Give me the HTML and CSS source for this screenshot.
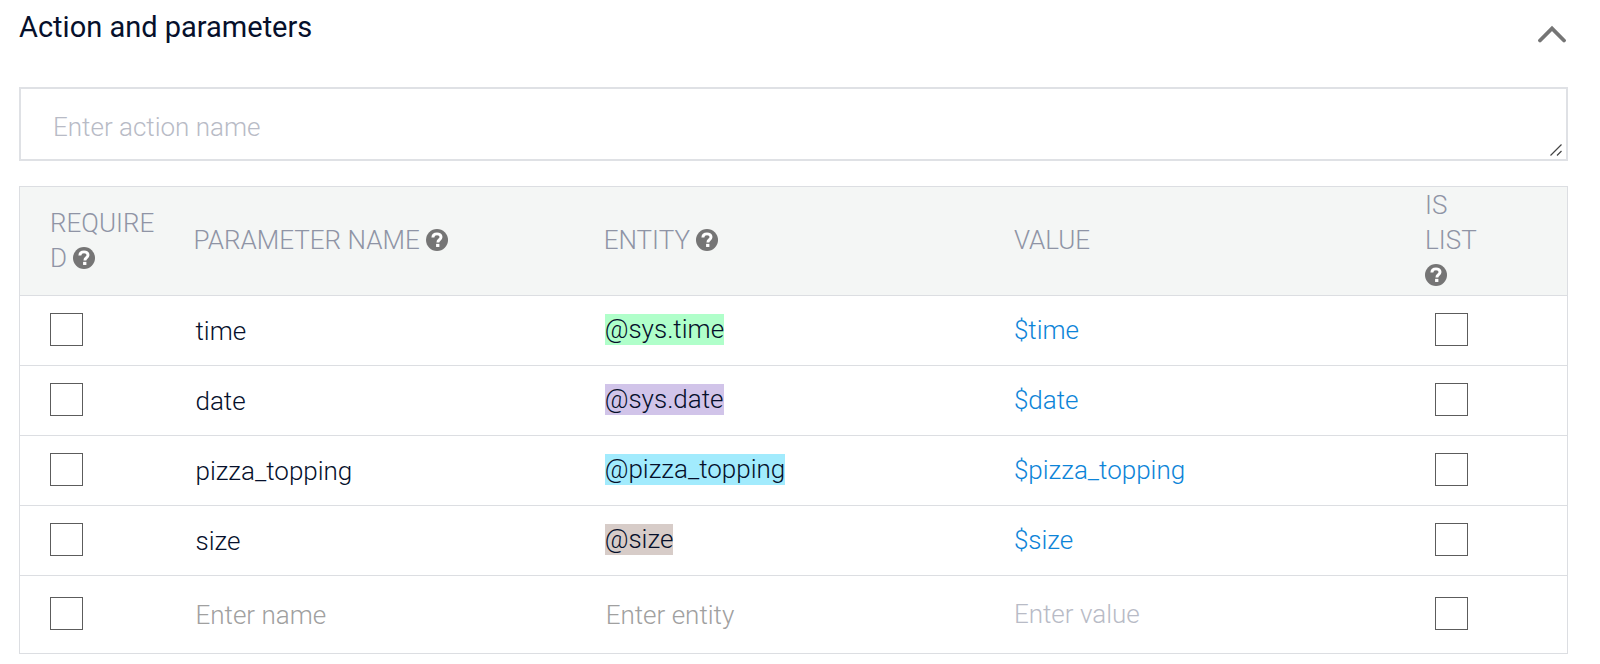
FILE: index.html
```html
<!DOCTYPE html>
<html lang="en">
<head>
<meta charset="utf-8">
<title>Action and parameters</title>
<link rel="stylesheet" href="styles.css">
</head>
<body>
<svg class="defs" aria-hidden="true">
  <symbol id="help" viewBox="0 0 24 24">
    <circle cx="12" cy="12" r="12" fill="#757575"/>
    <path d="M7.500 9.200C7.600 6.600 9.500 5.300 12 5.300c2.500 0 4.400 1.400 4.400 3.500 0 1.700-.9 2.400-2 3.200-1 .7-1.400 1.200-1.400 2.800" fill="none" stroke="#fff" stroke-width="3.200"/>
    <rect x="11" y="16.200" width="3.600" height="3.400" fill="#fff"/>
  </symbol>
</svg>
<main class="panel">
  <header class="panel-header">
    <h1 class="title">Action and parameters</h1>
    <button class="collapse" type="button" aria-label="Collapse section">
      <svg class="chevron" viewBox="0 0 28 18" aria-hidden="true"><path d="M2 15.500 14 3.500l12 12" fill="none" stroke="#757575" stroke-width="3.800" stroke-linecap="round"/></svg>
    </button>
  </header>
  <div class="action-box">
    <textarea class="action" rows="1" placeholder="Enter action name" aria-label="Action name"></textarea>
    <svg class="grip" viewBox="0 0 12 12" aria-hidden="true"><path d="M.5 11.500l11-11M7 11.500l4.500-4.500" fill="none" stroke="#444" stroke-width="1.200"/></svg>
  </div>
  <table class="params">
    <thead>
      <tr>
        <th class="col-required" scope="col">REQUIRED <svg class="help"><use href="#help"/></svg></th>
        <th class="col-wide" scope="col">PARAMETER NAME <svg class="help"><use href="#help"/></svg></th>
        <th class="col-wide" scope="col">ENTITY <svg class="help"><use href="#help"/></svg></th>
        <th class="col-wide" scope="col">VALUE</th>
        <th class="col-list" scope="col">IS LIST <svg class="help"><use href="#help"/></svg></th>
      </tr>
    </thead>
    <tbody>
      <tr>
        <td><input class="check" type="checkbox" aria-label="time required"></td>
        <td><input class="field name" type="text" value="time" aria-label="Parameter name"></td>
        <td><span class="entity green">@sys.time</span></td>
        <td><input class="field value" type="text" value="$time" aria-label="Value"></td>
        <td class="list-cell"><input class="check" type="checkbox" aria-label="time is list"></td>
      </tr>
      <tr>
        <td><input class="check" type="checkbox" aria-label="date required"></td>
        <td><input class="field name" type="text" value="date" aria-label="Parameter name"></td>
        <td><span class="entity purple">@sys.date</span></td>
        <td><input class="field value" type="text" value="$date" aria-label="Value"></td>
        <td class="list-cell"><input class="check" type="checkbox" aria-label="date is list"></td>
      </tr>
      <tr>
        <td><input class="check" type="checkbox" aria-label="pizza_topping required"></td>
        <td><input class="field name" type="text" value="pizza_topping" aria-label="Parameter name"></td>
        <td><span class="entity cyan">@pizza_topping</span></td>
        <td><input class="field value" type="text" value="$pizza_topping" aria-label="Value"></td>
        <td class="list-cell"><input class="check" type="checkbox" aria-label="pizza_topping is list"></td>
      </tr>
      <tr>
        <td><input class="check" type="checkbox" aria-label="size required"></td>
        <td><input class="field name" type="text" value="size" aria-label="Parameter name"></td>
        <td><span class="entity brown">@size</span></td>
        <td><input class="field value" type="text" value="$size" aria-label="Value"></td>
        <td class="list-cell"><input class="check" type="checkbox" aria-label="size is list"></td>
      </tr>
      <tr class="new-row">
        <td><input class="check" type="checkbox" aria-label="New parameter required"></td>
        <td><input class="field name" type="text" placeholder="Enter name" aria-label="Parameter name"></td>
        <td><input class="field name" type="text" placeholder="Enter entity" aria-label="Entity"></td>
        <td><input class="field value" type="text" placeholder="Enter value" aria-label="Value"></td>
        <td class="list-cell"><input class="check" type="checkbox" aria-label="New parameter is list"></td>
      </tr>
    </tbody>
  </table>
</main>
</body>
</html>
```
FILE: styles.css
```css
* { box-sizing: border-box; }

body {
  margin: 0;
  background: #fff;
  color: #06102b;
  font: 300 26px/36px Roboto, "Liberation Sans", sans-serif;
}

.defs { display: none; }

.panel { padding: 7px 32px 8px 19px; }

.panel-header {
  display: flex;
  justify-content: space-between;
  align-items: flex-start;
  height: 80px;
}

.title {
  margin: 0;
  font-size: 29px;
  font-weight: 400;
  line-height: 40px;
}

.collapse {
  padding: 18px 2px;
  border: 0;
  background: none;
}

.chevron { display: block; width: 28px; height: 18px; }

.action-box {
  position: relative;
  margin-bottom: 25px;
}

.action {
  display: block;
  width: 100%;
  height: 74px;
  padding: 20px 32px 16px;
  border: 2px solid #dfe1e5;
  border-radius: 0;
  outline: 0;
  color: inherit;
  font: inherit;
  overflow: hidden;
  resize: vertical;
}

.action::-webkit-resizer { background: transparent; }

.grip {
  position: absolute;
  right: 6px;
  bottom: 5px;
  width: 12px;
  height: 12px;
  pointer-events: none;
}

.params {
  width: 100%;
  border: 1px solid #dcdee2;
  border-collapse: collapse;
  table-layout: fixed;
}

.params th,
.params td {
  padding: 0 0 0 30px;
  border-bottom: 1px solid #dcdee2;
  text-align: left;
  vertical-align: middle;
}

.params th {
  padding-bottom: 1px;
  background: #f4f6f5;
  color: #8f94a5;
  font-weight: 300;
  line-height: 35px;
  overflow-wrap: anywhere;
}

.params thead tr { height: 109px; }

.params td {
  height: 70px;
  padding-bottom: 2px;
}

.params .new-row td { height: 78px; }

.col-required { width: 9.3%; }
.col-wide { width: 26.5%; }
.params .col-list { padding-left: 31px; padding-right: 82px; }
.params .list-cell { padding-left: 41px; }

.help {
  width: 22px;
  height: 22px;
  vertical-align: -2px;
}

.check {
  display: block;
  width: 33px;
  height: 33px;
  margin: 0;
  appearance: none;
  border: 1px solid #5c5c5c;
  background: #fff;
}

.check:checked { background: #757575; }

.field {
  display: block;
  width: 100%;
  height: 36px;
  padding: 0;
  border: 0;
  outline: 0;
  background: none;
  color: inherit;
  font: inherit;
}

.name { padding: 2px 0 0 2px; }
.value { color: #0d84d8; }
.name::placeholder { color: #a0a0a0; }
.value::placeholder,
.action::placeholder { color: #b8bbc6; }

.entity {
  display: block;
  width: fit-content;
  margin-left: 1px;
  line-height: 31px;
}

.green { background: #b0ffca; }
.purple { background: #d1c4e9; }
.cyan { background: #a2ebfd; }
.brown { background: #d7ccc8; }
```
